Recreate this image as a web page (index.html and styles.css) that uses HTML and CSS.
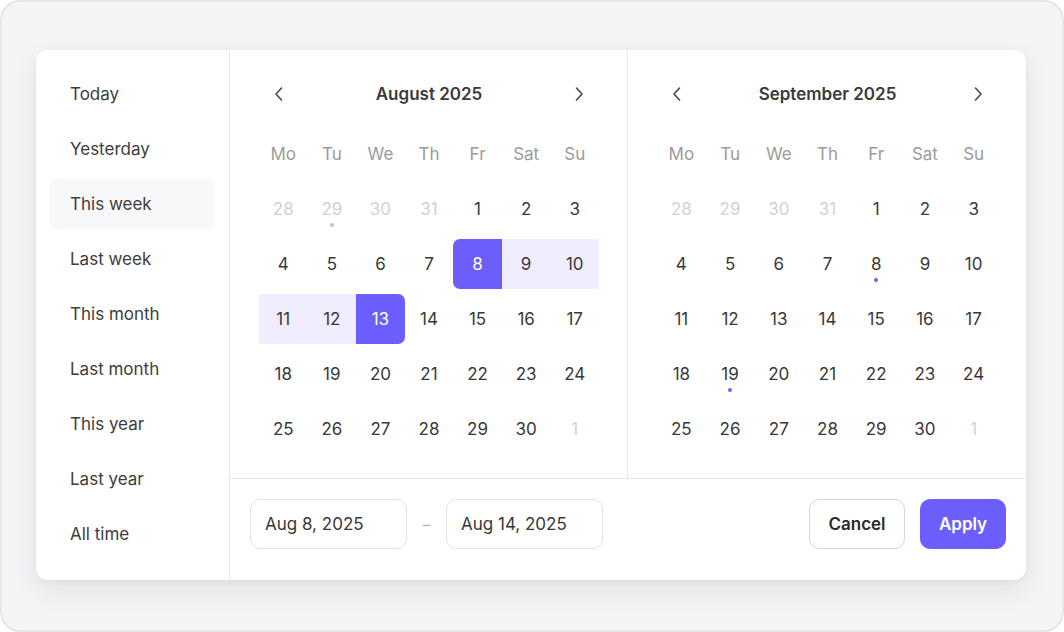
FILE: index.html
```html
<!DOCTYPE html>
<html lang="en">
<head>
<meta charset="utf-8">
<title>Date range picker</title>
<link rel="stylesheet" href="styles.css">
</head>
<body>
<div class="stage">
  <div class="picker">
    <aside class="presets">
      <div class="preset">Today</div>
      <div class="preset">Yesterday</div>
      <div class="preset active">This week</div>
      <div class="preset">Last week</div>
      <div class="preset">This month</div>
      <div class="preset">Last month</div>
      <div class="preset">This year</div>
      <div class="preset">Last year</div>
      <div class="preset">All time</div>
    </aside>
    <div class="main">
      <div class="months">
        <section class="month">
          <header class="month-head">
            <button class="nav"><svg width="10" height="16" viewBox="0 0 10 16"><path d="M7.5 2 L2 8 L7.5 14" fill="none" stroke="#4a4a4a" stroke-width="1.6" stroke-linecap="round" stroke-linejoin="round"/></svg></button>
            <div class="title">August 2025</div>
            <button class="nav"><svg width="10" height="16" viewBox="0 0 10 16"><path d="M2.5 2 L8 8 L2.5 14" fill="none" stroke="#4a4a4a" stroke-width="1.6" stroke-linecap="round" stroke-linejoin="round"/></svg></button>
          </header>
          <div class="grid">
            <div class="wd">Mo</div><div class="wd">Tu</div><div class="wd">We</div><div class="wd">Th</div><div class="wd">Fr</div><div class="wd">Sat</div><div class="wd">Su</div>
            <div class="day out">28</div><div class="day out">29<span class="dot gray"></span></div><div class="day out">30</div><div class="day out">31</div><div class="day">1</div><div class="day">2</div><div class="day">3</div>
            <div class="day">4</div><div class="day">5</div><div class="day">6</div><div class="day">7</div><div class="day sel start">8</div><div class="day range">9</div><div class="day range">10</div>
            <div class="day range">11</div><div class="day range">12</div><div class="day sel end">13</div><div class="day">14</div><div class="day">15</div><div class="day">16</div><div class="day">17</div>
            <div class="day">18</div><div class="day">19</div><div class="day">20</div><div class="day">21</div><div class="day">22</div><div class="day">23</div><div class="day">24</div>
            <div class="day">25</div><div class="day">26</div><div class="day">27</div><div class="day">28</div><div class="day">29</div><div class="day">30</div><div class="day out">1</div>
          </div>
        </section>
        <section class="month">
          <header class="month-head">
            <button class="nav"><svg width="10" height="16" viewBox="0 0 10 16"><path d="M7.5 2 L2 8 L7.5 14" fill="none" stroke="#4a4a4a" stroke-width="1.6" stroke-linecap="round" stroke-linejoin="round"/></svg></button>
            <div class="title">September 2025</div>
            <button class="nav"><svg width="10" height="16" viewBox="0 0 10 16"><path d="M2.5 2 L8 8 L2.5 14" fill="none" stroke="#4a4a4a" stroke-width="1.6" stroke-linecap="round" stroke-linejoin="round"/></svg></button>
          </header>
          <div class="grid">
            <div class="wd">Mo</div><div class="wd">Tu</div><div class="wd">We</div><div class="wd">Th</div><div class="wd">Fr</div><div class="wd">Sat</div><div class="wd">Su</div>
            <div class="day out">28</div><div class="day out">29</div><div class="day out">30</div><div class="day out">31</div><div class="day">1</div><div class="day">2</div><div class="day">3</div>
            <div class="day">4</div><div class="day">5</div><div class="day">6</div><div class="day">7</div><div class="day">8<span class="dot"></span></div><div class="day">9</div><div class="day">10</div>
            <div class="day">11</div><div class="day">12</div><div class="day">13</div><div class="day">14</div><div class="day">15</div><div class="day">16</div><div class="day">17</div>
            <div class="day">18</div><div class="day">19<span class="dot"></span></div><div class="day">20</div><div class="day">21</div><div class="day">22</div><div class="day">23</div><div class="day">24</div>
            <div class="day">25</div><div class="day">26</div><div class="day">27</div><div class="day">28</div><div class="day">29</div><div class="day">30</div><div class="day out">1</div>
          </div>
        </section>
      </div>
      <footer class="footer">
        <div class="inputs">
          <div class="field">Aug 8, 2025</div>
          <span class="dash">–</span>
          <div class="field">Aug 14, 2025</div>
        </div>
        <div class="actions">
          <button class="btn cancel">Cancel</button>
          <button class="btn apply">Apply</button>
        </div>
      </footer>
    </div>
  </div>
</div>
</body>
</html>
```
FILE: styles.css
```css
* { box-sizing: border-box; }
html, body { margin: 0; padding: 0; }
body {
  font-family: Inter, "Noto Sans", "Liberation Sans", sans-serif;
  color: #333;
  background: #fff;
}
.stage {
  width: 1064px;
  height: 632px;
  background: #f3f4f6;
  border: 2px solid #e5e6ea;
  border-radius: 20px;
  padding: 48px 0 0 34px;
  display: flex;
  align-items: flex-start;
}
.picker {
  width: 990px;
  height: 530px;
  background: #fff;
  border-radius: 12px;
  box-shadow: 0 10px 28px rgba(20, 20, 40, 0.08), 0 2px 6px rgba(20, 20, 40, 0.04);
  display: flex;
  overflow: hidden;
}
.presets {
  width: 194px;
  flex: none;
  border-right: 1px solid #e8e8ea;
  padding: 19px 14px 20px;
  display: flex;
  flex-direction: column;
  gap: 5px;
}
.preset {
  height: 50px;
  display: flex;
  align-items: center;
  padding-left: 20px;
  font-size: 17px;
  color: #3d3d3d;
  border-radius: 8px;
}
.preset.active { background: #f7f8fa; }
.main {
  flex: 1;
  display: flex;
  flex-direction: column;
}
.months {
  display: flex;
  border-bottom: 1px solid #e8e8ea;
}
.month {
  flex: 1;
  padding: 20px 28px 24px 29px;
}
.month:first-child { flex: 0 0 397px; }
.month + .month { border-left: 1px solid #e8e8ea; }
.month-head {
  height: 48px;
  display: flex;
  align-items: center;
  justify-content: space-between;
  margin-bottom: 11px;
}
.nav {
  width: 40px;
  height: 40px;
  border: 0;
  background: none;
  padding: 0;
  display: flex;
  align-items: center;
  justify-content: center;
}
.title {
  font-size: 17px;
  font-weight: 600;
  color: #3a3a3a;
}
.grid {
  display: grid;
  grid-template-columns: repeat(7, 1fr);
  row-gap: 5px;
}
.wd, .day {
  height: 50px;
  display: flex;
  align-items: center;
  justify-content: center;
  font-size: 17px;
}
.wd { color: #9b9b9b; }
.day { position: relative; color: #383838; }
.day.out { color: #d2d2d2; }
.day.range { background: #efedff; }
.day.sel { background: #6c5efb; color: #fff; }
.day.start { border-radius: 7px 0 0 7px; }
.day.end { border-radius: 0 7px 7px 0; }
.dot {
  position: absolute;
  left: 50%;
  bottom: 7px;
  width: 4px;
  height: 4px;
  margin-left: -2px;
  border-radius: 50%;
  background: #6c5efb;
}
.dot.gray { background: #c4c4c4; }
.footer {
  flex: 1;
  display: flex;
  align-items: flex-start;
  justify-content: space-between;
  padding: 20px 20px 0;
}
.inputs { display: flex; align-items: center; }
.field {
  width: 157px;
  height: 50px;
  border: 1px solid #e3e3e5;
  border-radius: 10px;
  display: flex;
  align-items: center;
  padding-left: 14px;
  font-size: 17px;
  color: #383838;
}
.dash {
  width: 39px;
  text-align: center;
  color: #b0b0b0;
  font-size: 15px;
}
.actions { display: flex; gap: 15px; }
.btn {
  height: 50px;
  border-radius: 10px;
  font-family: inherit;
  font-size: 17px;
  font-weight: 600;
  padding: 0;
}
.cancel {
  width: 96px;
  background: #fff;
  border: 1px solid #d6d6d8;
  color: #2a2a2a;
}
.apply {
  width: 86px;
  background: #6c5efb;
  border: 1px solid #6c5efb;
  color: #fff;
}
```
